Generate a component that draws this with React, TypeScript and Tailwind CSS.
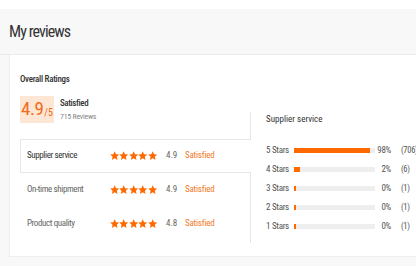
import React from "react";

const ORANGE = "#ff6a00";

const Star: React.FC = () => (
  <svg width="9.4" height="9.4" viewBox="0 0 24 24" className="shrink-0">
    <polygon
      points="12,0.5 15.4,8.1 23.5,8.9 17.4,14.4 19.1,22.8 12,18.5 4.9,22.8 6.6,14.4 0.5,8.9 8.6,8.1"
      fill={ORANGE}
    />
  </svg>
);

interface RatingRow {
  label: string;
  score: string;
  active?: boolean;
}

interface Dist {
  label: string;
  pct: number;
  pctText: string;
  count: string;
}

const App: React.FC = () => {
  const rows: RatingRow[] = [
    { label: "Supplier service", score: "4.9", active: true },
    { label: "On-time shipment", score: "4.9" },
    { label: "Product quality", score: "4.8" },
  ];

  const dist: Dist[] = [
    { label: "5 Stars", pct: 94, pctText: "98%", count: "(706)" },
    { label: "4 Stars", pct: 7, pctText: "2%", count: "(6)" },
    { label: "3 Stars", pct: 3, pctText: "0%", count: "(1)" },
    { label: "2 Stars", pct: 3, pctText: "0%", count: "(1)" },
    { label: "1 Stars", pct: 3, pctText: "0%", count: "(1)" },
  ];

  return (
    <div
      className="w-[416px] h-[266px] overflow-hidden bg-white pt-[9px] whitespace-nowrap font-stretch-condensed"
      style={{ fontFamily: 'Roboto, "Liberation Sans", sans-serif' }}
    >
      {/* header */}
      <div className="h-[46px] bg-[#f8f8f8] border-b border-[#ebebeb] flex items-center pl-[9px]">
        <h1 className="text-[16px] tracking-[-0.9px] text-[#333] leading-none">My reviews</h1>
      </div>

      <div className="bg-[#f8f8f8] pl-[9px] h-[211px]">
        <div className="bg-white border-l border-b border-[#eeeeee] h-[202px] pl-[10px] pt-[18px]">
          <div className="flex items-end">
            {/* left side */}
            <div className="w-[230px] shrink-0">
              <h2 className="text-[9px] leading-[12px] font-medium tracking-[-0.3px] text-[#333]">
                Overall Ratings
              </h2>

              <div className="flex items-center mt-[11px]">
                <div className="w-[34px] h-[27px] bg-[#fde6d4] flex items-end justify-center pb-[5px]">
                  <span className="text-[19px] leading-none tracking-[-0.5px] text-[#f26a1b]">4.9</span>
                  <span className="text-[10px] leading-none text-[#f26a1b] ml-[1px]">/5</span>
                </div>
                <div className="ml-[6px]">
                  <div className="text-[9px] leading-[12px] font-medium tracking-[-0.4px] text-[#333]">
                    Satisfied
                  </div>
                  <div className="text-[8px] leading-[12px] tracking-[-0.3px] text-[#8a8a8a] mt-[2px]">
                    715 Reviews
                  </div>
                </div>
              </div>

              <div className="mt-[16px] pb-[2px]">
                {rows.map((r) => (
                  <div
                    key={r.label}
                    className={`h-[34px] flex items-center pl-[6px] ${
                      r.active
                        ? "relative z-10 -mr-px bg-white border-t border-l border-b border-[#e6e6e6]"
                        : "border border-transparent"
                    }`}
                  >
                    <span
                      className={`w-[83px] shrink-0 text-[9px] tracking-[-0.4px] ${
                        r.active ? "text-[#333]" : "text-[#666]"
                      }`}
                    >
                      {r.label}
                    </span>
                    <div className="flex">
                      {[0, 1, 2, 3, 4].map((i) => (
                        <Star key={i} />
                      ))}
                    </div>
                    <span className="ml-[9px] w-[19px] text-[9px] text-[#666]">{r.score}</span>
                    <span className="text-[9px] tracking-[-0.2px] text-[#f27a2a]">Satisfied</span>
                  </div>
                ))}
              </div>
            </div>

            {/* right side */}
            <div className="flex-1 h-[131px] border-l border-[#e6e6e6] pl-[15px] pt-[1px]">
              <h3 className="text-[9px] leading-[12px] text-[#333]">Supplier service</h3>
              <div className="mt-[16px]">
                {dist.map((d) => (
                  <div
                    key={d.label}
                    className="h-[19px] flex items-center text-[9px] tracking-[-0.3px] text-[#555]"
                  >
                    <span className="w-[28px] shrink-0">{d.label}</span>
                    <div className="w-[81px] h-[5px] bg-[#eeeeee] shrink-0">
                      <div className="h-full bg-[#ff6a00]" style={{ width: `${d.pct}%` }} />
                    </div>
                    <span className="w-[16px] text-right shrink-0">{d.pctText}</span>
                    <span className="ml-[10px] text-[8.5px]">{d.count}</span>
                  </div>
                ))}
              </div>
            </div>
          </div>
        </div>
      </div>
    </div>
  );
};

export default App;
